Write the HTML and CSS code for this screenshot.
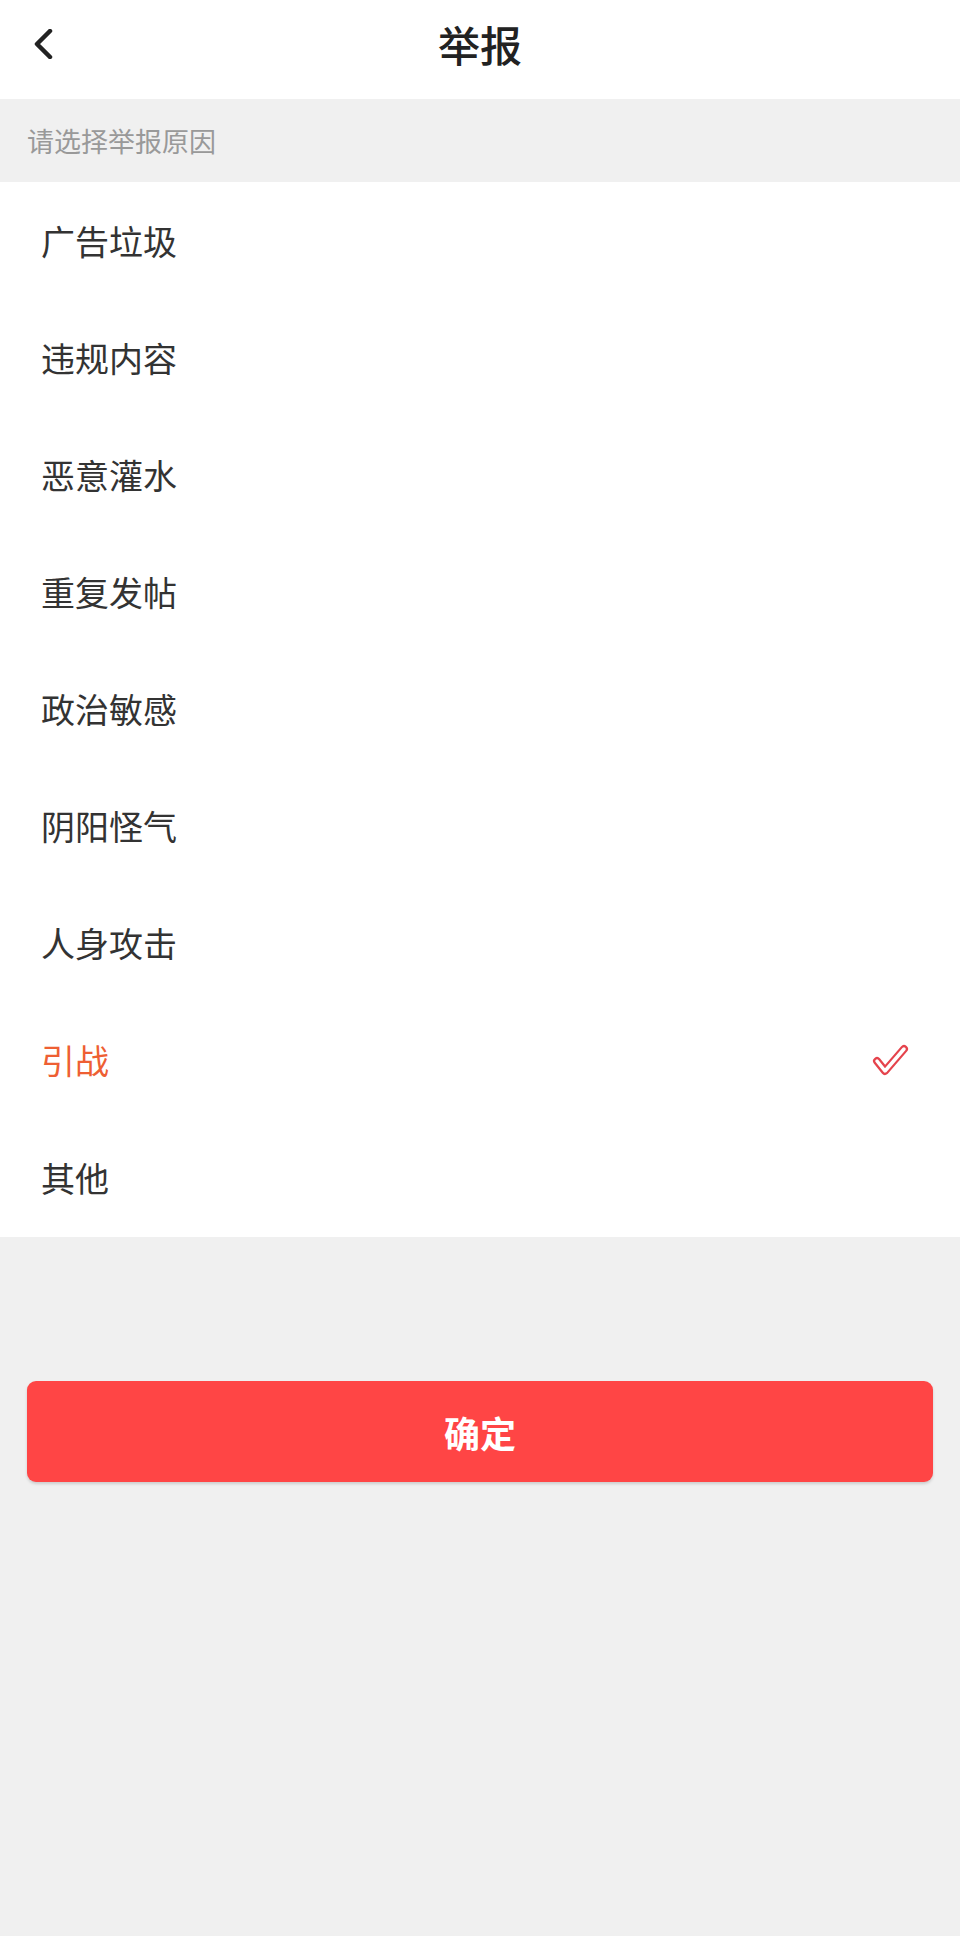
FILE: index.html
```html
<html>
	<head>
		<meta charset="utf-8">
		<link rel="stylesheet" href="styles.css">
	</head>
	<body>
		<div class="header">
			<div class="back">
				<svg width="22" height="30" viewBox="0 0 22 30"><polyline points="18,2 5,15 18,28" fill="none" stroke="#222" stroke-width="4.5" stroke-linecap="round" stroke-linejoin="round"/></svg>
			</div>
			<div class="title">举报</div>
			<div></div>
		</div>
		<div class="section">请选择举报原因</div>
		<ul class="reasons">
			<li>广告垃圾</li>
			<li>违规内容</li>
			<li>恶意灌水</li>
			<li>重复发帖</li>
			<li>政治敏感</li>
			<li>阴阳怪气</li>
			<li>人身攻击</li>
			<li class="on">引战
				<svg class="tick" width="38" height="32" viewBox="0 0 38 32">
					<polyline points="6,17 14,27 33,5" fill="none" stroke="#e5434c" stroke-width="8" stroke-linecap="round" stroke-linejoin="round"/>
					<polyline points="6,17 14,27 33,5" fill="none" stroke="#fff" stroke-width="3.5" stroke-linecap="round" stroke-linejoin="round"/>
				</svg>
			</li>
			<li>其他</li>
		</ul>
		<div class="actions">
			<button class="ok">确定</button>
		</div>
	</body>
</html>
```

FILE: styles.css
```css
body {
	margin: 0;
	background-color: #f0f0f0;
	font-family: "Noto Sans CJK SC", "Noto Sans", sans-serif;
}
.header {
	height: 99px;
	background-color: #fff;
	display: grid;
	grid-template-columns: 1fr auto 1fr;
	align-items: center;
}
.back {
	padding-left: 32px;
	padding-bottom: 12px;
	display: flex;
	align-items: center;
}
.title {
	font-size: 42px;
	font-weight: 500;
	color: #222;
	padding-bottom: 12px;
}
.section {
	height: 83px;
	padding-left: 27px;
	display: flex;
	align-items: center;
	font-size: 27px;
	color: #999;
}
.reasons {
	list-style: none;
	margin: 0;
	padding: 0;
	background-color: #fff;
}
.reasons li {
	height: 117px;
	padding: 0 51px 0 41px;
	display: flex;
	align-items: center;
	justify-content: space-between;
	font-size: 34px;
	color: #333;
}
.reasons li:last-child {
	height: 119px;
}
.reasons li.on {
	color: #ee5f33;
}
.actions {
	padding: 144px 27px 0;
}
.ok {
	width: 100%;
	height: 101px;
	border: 0;
	border-radius: 9px;
	background-color: #ff4545;
	color: #fff;
	font-family: inherit;
	font-size: 36px;
	font-weight: bold;
	box-shadow: 0 2px 3px rgba(0, 0, 0, 0.15);
}
```
